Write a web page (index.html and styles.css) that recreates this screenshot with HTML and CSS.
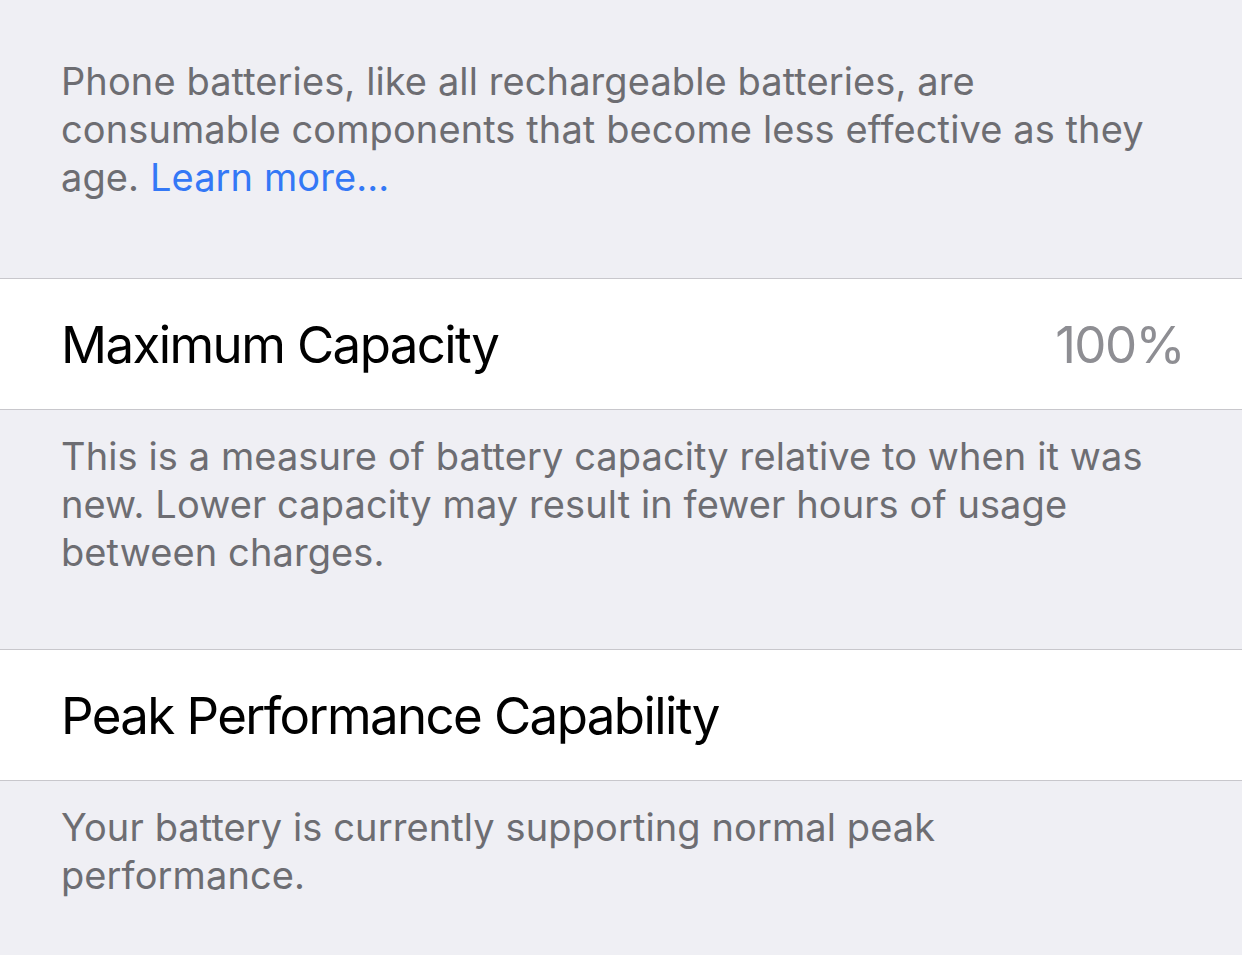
FILE: index.html
```html
<!DOCTYPE html>
<html lang="en">
<head>
  <meta charset="UTF-8">
  <title>Battery Health</title>
  <link rel="stylesheet" href="styles.css">
</head>
<body>

  <p class="footer first">Phone batteries, like all rechargeable batteries, are consumable components that become less effective as they age. <a href="#">Learn more...</a></p>

  <div class="row">
    <span class="label">Maximum Capacity</span>
    <span class="value">100%</span>
  </div>
  <p class="footer">This is a measure of battery capacity relative to when it was new. Lower capacity may result in fewer hours of usage between charges.</p>

  <div class="row">
    <span class="label">Peak Performance Capability</span>
  </div>
  <p class="footer">Your battery is currently supporting normal peak performance.</p>

</body>
</html>
```

FILE: styles.css
```css
body { margin: 0; background: #efeff4; font-family: Inter, "Noto Sans", sans-serif; }
.footer { margin: 0; padding: 22px 61px 73px; font-size: 38px; line-height: 48px; letter-spacing: 0.1px; color: #6d6d72; }
.footer.first { padding-top: 57px; padding-bottom: 77px; }
.footer a { color: #3478f6; text-decoration: none; }
.row { display: flex; justify-content: space-between; align-items: center; height: 130px; padding: 0 58px 0 61px; background: #fff; border-top: 1px solid #c8c7cc; border-bottom: 1px solid #c8c7cc; }
.label { font-size: 51px; letter-spacing: -1.6px; color: #000; }
.value { font-size: 51px; letter-spacing: -1.6px; color: #8e8e93; }
```
